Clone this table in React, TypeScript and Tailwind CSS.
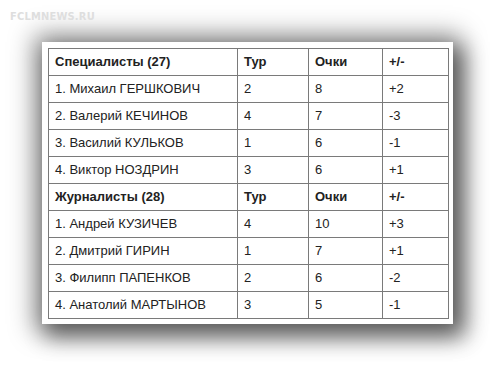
import { Fragment } from "react";

const GROUPS = [
  {
    title: "Специалисты (27)",
    rows: [
      ["1. Михаил ГЕРШКОВИЧ", "2", "8", "+2"],
      ["2. Валерий КЕЧИНОВ", "4", "7", "-3"],
      ["3. Василий КУЛЬКОВ", "1", "6", "-1"],
      ["4. Виктор НОЗДРИН", "3", "6", "+1"],
    ],
  },
  {
    title: "Журналисты (28)",
    rows: [
      ["1. Андрей КУЗИЧЕВ", "4", "10", "+3"],
      ["2. Дмитрий ГИРИН", "1", "7", "+1"],
      ["3. Филипп ПАПЕНКОВ", "2", "6", "-2"],
      ["4. Анатолий МАРТЫНОВ", "3", "5", "-1"],
    ],
  },
];

export default function App() {
  return (
    <div className="relative w-[493px] h-[365px] overflow-hidden bg-white font-['Liberation_Sans',Arial,sans-serif] text-[13px] text-[#222]">
      {/* watermark */}
      <div className="absolute left-[10px] top-[9px] text-[11px] font-bold tracking-[0.2px] text-[#dedede] font-['DejaVu_Sans_Condensed',sans-serif]">
        FCLMNEWS.RU
      </div>

      <div className="ml-[42px] pt-[42px]">
        <div className="w-[411px] bg-white pt-[6px] pl-[6px] pr-[5px] pb-[5px] shadow-[0_0_24px_8px_rgba(0,0,0,0.4),8px_10px_20px_4px_rgba(0,0,0,0.45)]">
          <table className="w-[400px] table-fixed border-collapse border border-[#333]">
            <colgroup>
              <col className="w-[189px]" />
              <col className="w-[71px]" />
              <col className="w-[74px]" />
              <col className="w-[66px]" />
            </colgroup>
            <tbody>
              {GROUPS.map((g) => (
                <Fragment key={g.title}>
                  <tr className="h-[27px] font-bold">
                    <td className="border border-[#7a7a7a] px-[6px]">{g.title}</td>
                    <td className="border border-[#7a7a7a] px-[6px]">Тур</td>
                    <td className="border border-[#7a7a7a] px-[6px]">Очки</td>
                    <td className="border border-[#7a7a7a] px-[6px]">+/-</td>
                  </tr>
                  {g.rows.map((r) => (
                    <tr key={r[0]} className="h-[27px]">
                      {r.map((c, i) => (
                        <td key={i} className="border border-[#7a7a7a] px-[6px]">
                          {c}
                        </td>
                      ))}
                    </tr>
                  ))}
                </Fragment>
              ))}
            </tbody>
          </table>
        </div>
      </div>
    </div>
  );
}
